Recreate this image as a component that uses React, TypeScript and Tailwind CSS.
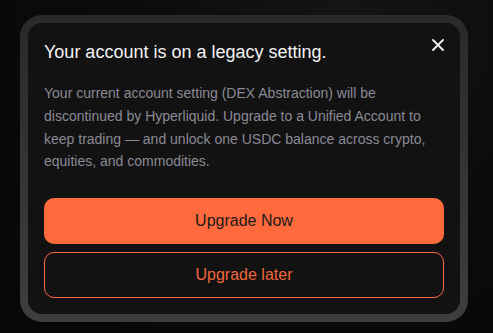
import React from "react";

export default function App() {
  return (
    <div
      className="w-[493px] h-[333px] flex items-start justify-center bg-[#0b0b0b] bg-[radial-gradient(ellipse_at_70%_10%,#151515_0%,#0b0b0b_45%,#070707_100%)]"
      style={{ fontFamily: '"Liberation Sans", Arial, sans-serif' }}
    >
      <div className="mt-[15px] ml-[-5px] w-[448px] p-2 rounded-[22px] bg-gradient-to-b from-[#2a2a2a] to-[#3e3e3e]">
        <div className="relative rounded-[14px] bg-[#121212] px-4 pt-[15px] pb-4">
          <button className="absolute right-[16px] top-[16px] w-3 h-3 text-[#f2f2f2]">
            <svg viewBox="0 0 12 12" width="12" height="12" fill="none" stroke="currentColor" strokeWidth="1.8" strokeLinecap="round">
              <path d="M1 1 L11 11 M11 1 L1 11" />
            </svg>
          </button>
          <h2 className="text-[18px] leading-[28px] text-[#f2f2f2] font-normal">
            Your account is on a legacy setting.
          </h2>
          <p className="mt-4 text-[14px] leading-[22.75px] text-[#8a8a96]">
            Your current account setting (DEX Abstraction) will be discontinued by Hyperliquid. Upgrade to a Unified Account to keep trading — and unlock one USDC balance across crypto, equities, and commodities.
          </p>
          <div className="mt-[25px] flex flex-col gap-2">
            <button className="h-[46px] w-full rounded-[10px] bg-[#ff6a3d] text-[16px] text-[#1a1a1a]">
              Upgrade Now
            </button>
            <button className="h-[46px] w-full rounded-[10px] border border-[#ff6a3d] text-[16px] text-[#f0663c]">
              Upgrade later
            </button>
          </div>
        </div>
      </div>
    </div>
  );
}
